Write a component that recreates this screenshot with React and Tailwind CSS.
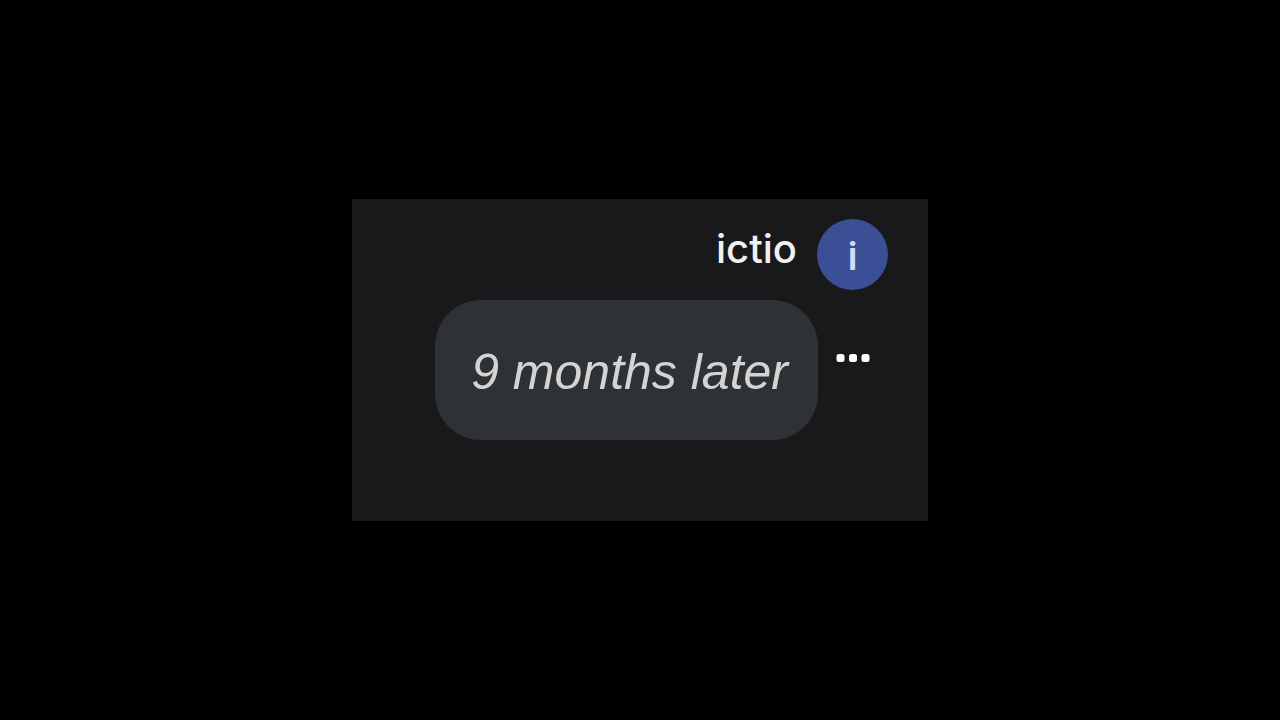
const message = {
  author: 'ictio',
  text: '9 months later',
};

const Avatar = ({ name }) => (
  <div className="w-[71px] h-[71px] shrink-0 rounded-full bg-[#3b4f96] pt-1 flex items-center justify-center font-[Roboto,sans-serif] text-[40px] leading-none font-medium text-[#cfdcf8]">
    {name.charAt(0)}
  </div>
);

const MoreButton = () => (
  <button
    type="button"
    aria-label="More options"
    className="w-[70px] h-12 shrink-0 mt-[34px] flex items-center justify-center text-white"
  >
    <svg viewBox="0 0 34 8" className="w-[34px] h-2" fill="currentColor" aria-hidden="true">
      <rect x="0.5" y="0" width="8" height="8" rx="2.5" />
      <rect x="13" y="0" width="8" height="8" rx="2.5" />
      <rect x="25.5" y="0" width="8" height="8" rx="2.5" />
    </svg>
  </button>
);

const App = () => {
  return (
    <div className="min-h-screen bg-black flex items-center justify-center font-['Inter',sans-serif]">
      <main className="w-full max-w-xl bg-[#19191b] pt-5 pr-10 pb-[81px]">
        <div className="flex items-start justify-end">
          <span className="pt-1 pr-5 text-[40px] leading-[52px] font-medium text-[#f0f0f0]">
            {message.author}
          </span>
          <Avatar name={message.author} />
        </div>

        <div className="mt-[10px] flex items-start justify-end">
          <p className="rounded-[46px] bg-[#2f3234] pt-[42px] pb-[38px] pl-9 pr-[30px] font-['Liberation_Sans',sans-serif] text-[50px] leading-[60px] italic text-[#d4d4d4] whitespace-nowrap">
            {message.text}
          </p>
          <MoreButton />
        </div>
      </main>
    </div>
  );
};

export default App;
